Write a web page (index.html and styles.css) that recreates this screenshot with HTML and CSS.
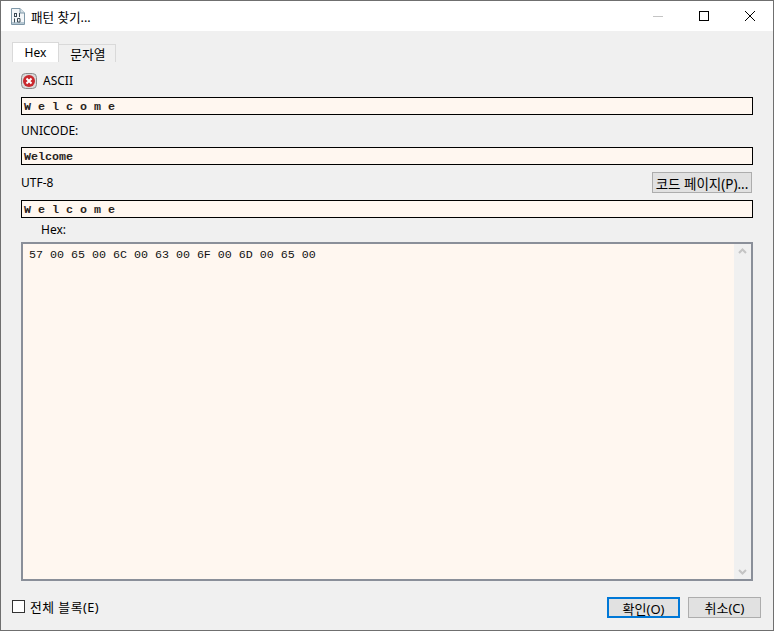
FILE: index.html
```html
<!DOCTYPE html>
<html lang="ko">
<head>
<meta charset="utf-8">
<title>패턴 찾기...</title>
<link rel="stylesheet" href="styles.css">
</head>
<body>
<div class="window">
  <header class="titlebar">
    <svg class="app-icon" width="14" height="17" viewBox="0 0 14 17">
      <path d="M0.500 0.500H9L13.500 5V16.500H0.500Z" fill="#f4f7f9" stroke="#7f98a8"/>
      <path d="M9 0.500V5H13.500" fill="#d5e0e6" stroke="#7f98a8"/>
      <path d="M1 14H13V16H1Z" fill="#b6c7d2"/>
      <rect x="3.500" y="5.500" width="2" height="3" fill="none" stroke="#3c4a55"/>
      <path d="M8.500 5V9M3.500 10.500V14.500M6.500 10.500h2.500v3.500h-2.500z" fill="none" stroke="#3c4a55"/>
    </svg>
    <span class="title">패턴 찾기...</span>
    <div class="controls">
      <svg class="ctl" width="46" height="30" viewBox="0 0 46 30"><path d="M18 15.500H28" stroke="#c4c4c4"/></svg>
      <svg class="ctl" width="46" height="30" viewBox="0 0 46 30"><rect x="18.500" y="10.500" width="9" height="9" fill="none" stroke="#000"/></svg>
      <svg class="ctl" width="46" height="30" viewBox="0 0 46 30"><path d="M18 10L28 20M28 10L18 20" stroke="#000" fill="none"/></svg>
    </div>
  </header>
  <main class="body">
    <nav class="tabs">
      <div class="tab active">Hex</div>
      <div class="tab ko">문자열</div>
    </nav>
    <div class="panel">
      <div class="row row-ascii">
        <svg class="err" width="16" height="16" viewBox="0 0 16 16">
          <rect x="0.500" y="0.500" width="15" height="15" rx="4" fill="#d9d9d9" stroke="#8c8c8c"/>
          <circle cx="8" cy="8" r="6" fill="#c9282d"/>
          <path d="M5.500 5.500L10.500 10.500M10.500 5.500L5.500 10.500" stroke="#fff" stroke-width="2"/>
        </svg>
        <span>ASCII</span>
      </div>
      <div class="field">W e l c o m e</div>
      <div class="row row-uni"><span>UNICODE:</span></div>
      <div class="field">Welcome</div>
      <div class="row row-utf">
        <span>UTF-8</span>
        <button class="btn btn-code">코드 페이지(P)...</button>
      </div>
      <div class="field">W e l c o m e</div>
      <div class="row row-hex"><span>Hex:</span></div>
      <div class="hexbox">
        <div class="hextext">57 00 65 00 6C 00 63 00 6F 00 6D 00 65 00</div>
        <div class="scrollbar">
          <svg width="17" height="14" viewBox="0 0 17 14"><path d="M5 9L8.500 5.500L12 9" fill="none" stroke="#c4c4c4" stroke-width="2"/></svg>
          <svg width="17" height="14" viewBox="0 0 17 14"><path d="M5 5L8.500 8.500L12 5" fill="none" stroke="#c4c4c4" stroke-width="2"/></svg>
        </div>
      </div>
    </div>
    <footer class="footer">
      <label class="check ko"><span class="box"></span>전체 블록(E)</label>
      <div class="actions">
        <button class="btn btn-main primary">확인(O)</button>
        <button class="btn btn-main">취소(C)</button>
      </div>
    </footer>
  </main>
</div>
</body>
</html>
```

FILE: styles.css
```css
* { box-sizing: border-box; }
html, body { margin: 0; padding: 0; }
body {
  width: 774px;
  height: 631px;
  overflow: hidden;
  font-family: "Noto Sans", "Noto Sans CJK KR", sans-serif;
  font-size: 12px;
  color: #000;
}
.window {
  width: 774px;
  height: 631px;
  display: flex;
  flex-direction: column;
  background: #f0f0f0;
  border: 1px solid #6f6f6f;
}
.titlebar {
  height: 30px;
  flex: none;
  display: flex;
  align-items: center;
  background: #fff;
  padding-left: 10px;
}
.app-icon { flex: none; margin-right: 6px; }
.title { font-size: 12.600px; }
.ko { font-size: 12.800px; }
.controls { margin-left: auto; display: flex; }
.ctl { display: block; }
.body { flex: 1; display: flex; flex-direction: column; padding: 11px 20px 0 11px; min-height: 0; }
.tabs { display: flex; align-items: flex-end; height: 20px; flex: none; }
.tab {
  height: 18px;
  width: 57px;
  padding-left: 2px;
  display: flex;
  align-items: center;
  justify-content: center;
  border: 1px solid #d9d9d9;
  border-bottom: 0;
  border-left: 0;
}
.tab.active {
  height: 20px;
  width: 47px;
  padding-left: 0;
  background: #fff;
  border: 1px solid #d9d9d9;
  border-bottom: 0;
}
.panel { padding-left: 9px; flex: none; display: flex; flex-direction: column; }
.row { display: flex; align-items: center; }
.row-ascii { height: 35px; gap: 6px; padding-top: 2px; }
.row-uni { height: 32px; padding-bottom: 2px; }
.row-utf { height: 35px; justify-content: space-between; }
.row-hex { height: 24px; padding-left: 20px; padding-bottom: 2px; }
.field {
  height: 18px;
  border: 1px solid #000;
  background: #fff7f0;
  font-family: "Liberation Mono", monospace;
  font-weight: 700;
  font-size: 11.670px;
  line-height: 16px;
  padding: 1px 0 0 2px;
  white-space: pre;
  color: #2a2320;
}
.hexbox {
  height: 339px;
  border: 2px solid #8a8f99;
  background: #fff7f0;
  display: flex;
  justify-content: space-between;
}
.hextext {
  font-family: "Liberation Mono", monospace;
  font-size: 11.670px;
  padding: 4px 0 0 6px;
  line-height: 14px;
  white-space: pre;
  color: #111;
}
.scrollbar {
  width: 17px;
  background: #f0f0f0;
  display: flex;
  flex-direction: column;
  justify-content: space-between;
}
.scrollbar svg { display: block; }
.btn {
  font-family: inherit;
  font-size: 13px;
  color: #000;
  background: #e1e1e1;
  border: 1px solid #adadad;
  padding: 0;
  margin: 0;
}
.btn-code { width: 100px; height: 21px; margin-right: 1px; font-size: 13.500px; white-space: nowrap; }
.footer {
  flex: 1;
  display: flex;
  align-items: flex-start;
  justify-content: space-between;
  padding-top: 16px;
  margin-right: -8px;
}
.check { display: flex; align-items: center; gap: 5px; margin-top: 1px; height: 17px; white-space: nowrap; letter-spacing: 0.500px; }
.box { width: 13px; height: 13px; background: #fff; border: 1px solid #333; }
.actions { display: flex; gap: 8px; }
.btn-main { width: 73px; height: 21px; }
.primary { border: 2px solid #0078d7; }
```
